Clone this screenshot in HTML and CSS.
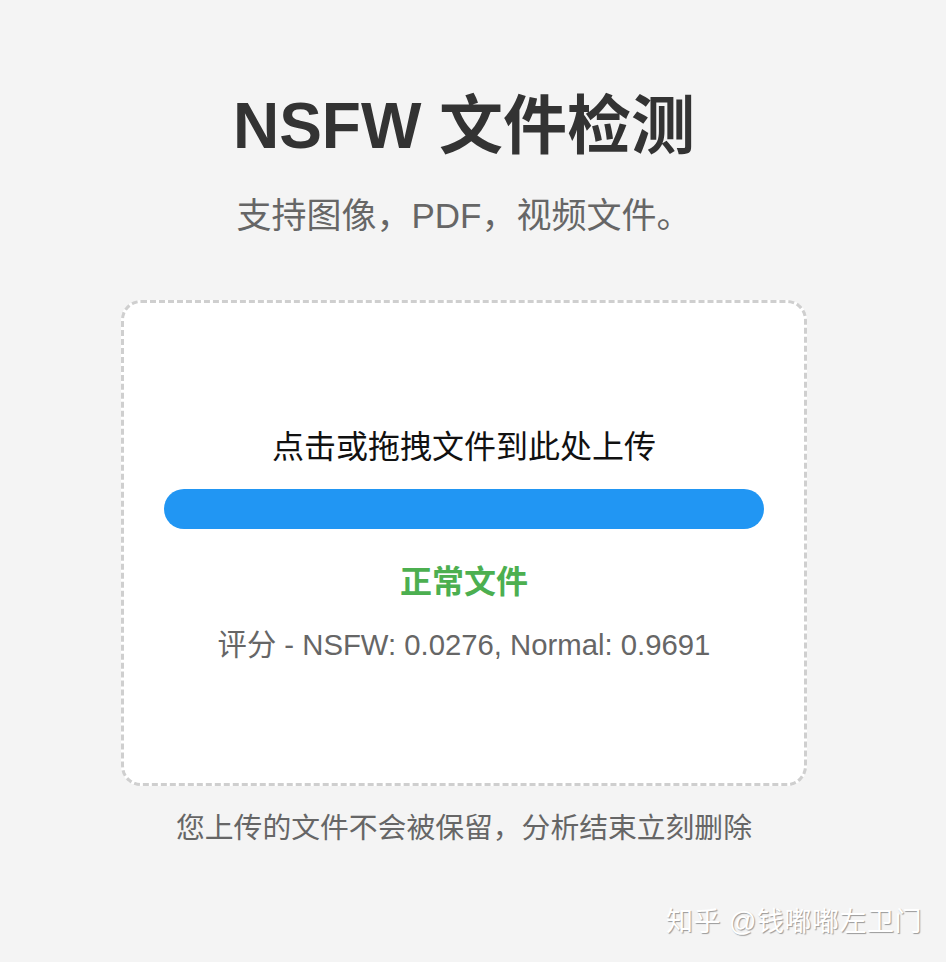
FILE: index.html
```html
<!DOCTYPE html>
<html lang="zh-CN">
<head>
<meta charset="utf-8">
<title>NSFW 文件检测</title>
<link rel="stylesheet" href="styles.css">
</head>
<body>
<main class="page">
  <h1 class="title">NSFW 文件检测</h1>
  <p class="subtitle">支持图像，PDF，视频文件。</p>
  <section class="drop">
    <p class="drop-text">点击或拖拽文件到此处上传</p>
    <div class="bar"></div>
    <p class="result">正常文件</p>
    <p class="score">评分 - NSFW: 0.0276, Normal: 0.9691</p>
  </section>
  <p class="note">您上传的文件不会被保留，分析结束立刻删除</p>
</main>
<div class="watermark">知乎 @钱嘟嘟左卫门</div>
</body>
</html>
```
FILE: styles.css
```css
html, body {
  margin: 0;
  padding: 0;
  background: #f4f4f4;
}
body {
  font-family: "Liberation Sans", "Noto Sans CJK SC", sans-serif;
  color: #333;
  min-height: 962px;
  position: relative;
  padding-right: 18px;
  box-sizing: border-box;
}
.page {
  width: 686px;
  margin: 0 auto;
  padding-top: 88px;
  display: flex;
  flex-direction: column;
  align-items: center;
}
.title {
  margin: 0;
  font-size: 64px;
  line-height: 76px;
  font-weight: 700;
  color: #333;
}
.subtitle {
  margin: 31px 0 0;
  font-size: 35px;
  line-height: 42px;
  color: #666;
}
.drop {
  margin-top: 63px;
  width: 686px;
  height: 486px;
  box-sizing: border-box;
  border: 3px dashed #cfcfcf;
  border-radius: 20px;
  background: #fff;
  padding: 124px 40px 0;
  display: flex;
  flex-direction: column;
  align-items: center;
}
.drop-text {
  margin: 0;
  font-size: 32px;
  line-height: 40px;
  color: #111;
}
.bar {
  margin-top: 22px;
  width: 600px;
  height: 40px;
  border-radius: 20px;
  background: #2196f3;
}
.result {
  margin: 33px 0 0;
  font-size: 32px;
  line-height: 40px;
  font-weight: 700;
  color: #4caf50;
}
.score {
  margin: 25px 0 0;
  font-size: 29.3px;
  line-height: 36px;
  color: #666;
}
.note {
  margin: 25px 0 0;
  font-size: 28.8px;
  line-height: 34px;
  color: #666;
}
.watermark {
  position: absolute;
  right: 24px;
  top: 902px;
  font-size: 27px;
  line-height: 40px;
  color: #fff;
  text-shadow: 1px 1px 1px #9a9a9a;
  letter-spacing: 0.5px;
}
```
